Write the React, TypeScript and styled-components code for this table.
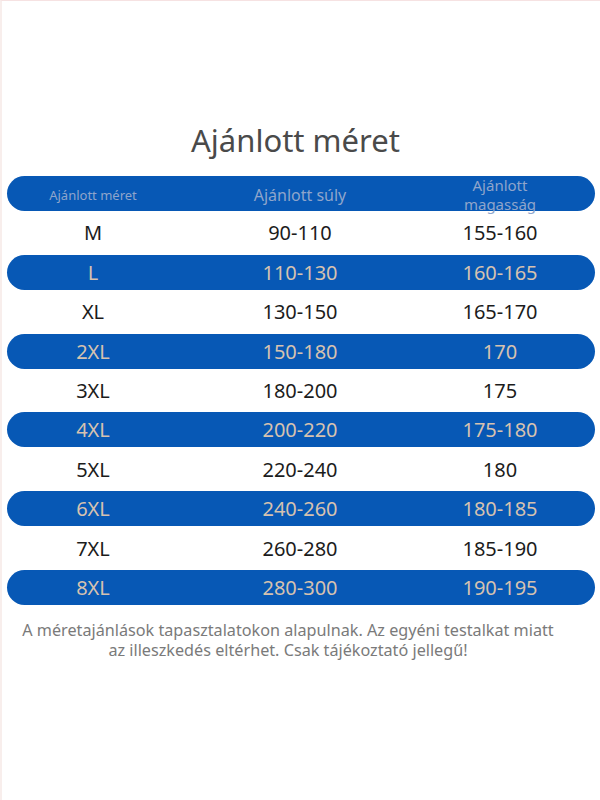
import React from "react";
import styled, { createGlobalStyle } from "styled-components";

const Global = createGlobalStyle`
  html, body { margin: 0; padding: 0; background: #ffffff; }
  body { font-family: "Noto Sans", "Open Sans", sans-serif; }
`;

const Page = styled.div`
  width: 600px;
  height: 800px;
  box-sizing: border-box;
  border-top: 1px solid #f6e2e2;
  border-left: 2px solid #f8eeec;
  display: flex;
  flex-direction: column;
  align-items: stretch;
  padding-top: 118px;
`;

const Title = styled.h1`
  margin: 0;
  text-align: center;
  font-family: "Noto Sans", sans-serif;
  font-weight: 400;
  font-size: 31px;
  line-height: 42px;
  color: #4a4a4a;
  padding-right: 11px;
`;

const Table = styled.div`
  margin: 15px 5px 0 5px;
  display: flex;
  flex-direction: column;
  gap: 4.4px;
`;

const Row = styled.div<{ $blue?: boolean }>`
  height: 35px;
  border-radius: 18px;
  background: ${(p) => (p.$blue ? "#0758b5" : "transparent")};
  color: ${(p) => (p.$blue ? "#d6c2b0" : "#1c1c1c")};
  display: grid;
  grid-template-columns: 172px 242px 158px;
  align-items: center;
  font-size: 20px;
  line-height: 35px;
`;

const Cell = styled.div`
  text-align: center;
  white-space: nowrap;
`;

const HeadCell = styled.div<{ $size: number }>`
  text-align: center;
  color: #8fa5cb;
  font-size: ${(p) => p.$size}px;
  line-height: 19px;
`;

const Note = styled.p`
  margin: 15px 0 0 0;
  padding-right: 26px;
  text-align: center;
  font-size: 16.2px;
  line-height: 20px;
  color: #7a7a7a;
`;

const rows = [
  ["M", "90-110", "155-160"],
  ["L", "110-130", "160-165"],
  ["XL", "130-150", "165-170"],
  ["2XL", "150-180", "170"],
  ["3XL", "180-200", "175"],
  ["4XL", "200-220", "175-180"],
  ["5XL", "220-240", "180"],
  ["6XL", "240-260", "180-185"],
  ["7XL", "260-280", "185-190"],
  ["8XL", "280-300", "190-195"],
];

export default function App() {
  return (
    <>
      <Global />
      <Page>
        <Title>Ajánlott méret</Title>
        <Table>
          <Row $blue>
            <HeadCell $size={13}>Ajánlott méret</HeadCell>
            <HeadCell $size={16}>Ajánlott súly</HeadCell>
            <HeadCell $size={15}>
              Ajánlott
              <br />
              magasság
            </HeadCell>
          </Row>
          {rows.map((r, i) => (
            <Row key={r[0]} $blue={i % 2 === 1}>
              <Cell>{r[0]}</Cell>
              <Cell>{r[1]}</Cell>
              <Cell>{r[2]}</Cell>
            </Row>
          ))}
        </Table>
        <Note>
          A méretajánlások tapasztalatokon alapulnak. Az egyéni testalkat miatt
          <br />
          az illeszkedés eltérhet. Csak tájékoztató jellegű!
        </Note>
      </Page>
    </>
  );
}
